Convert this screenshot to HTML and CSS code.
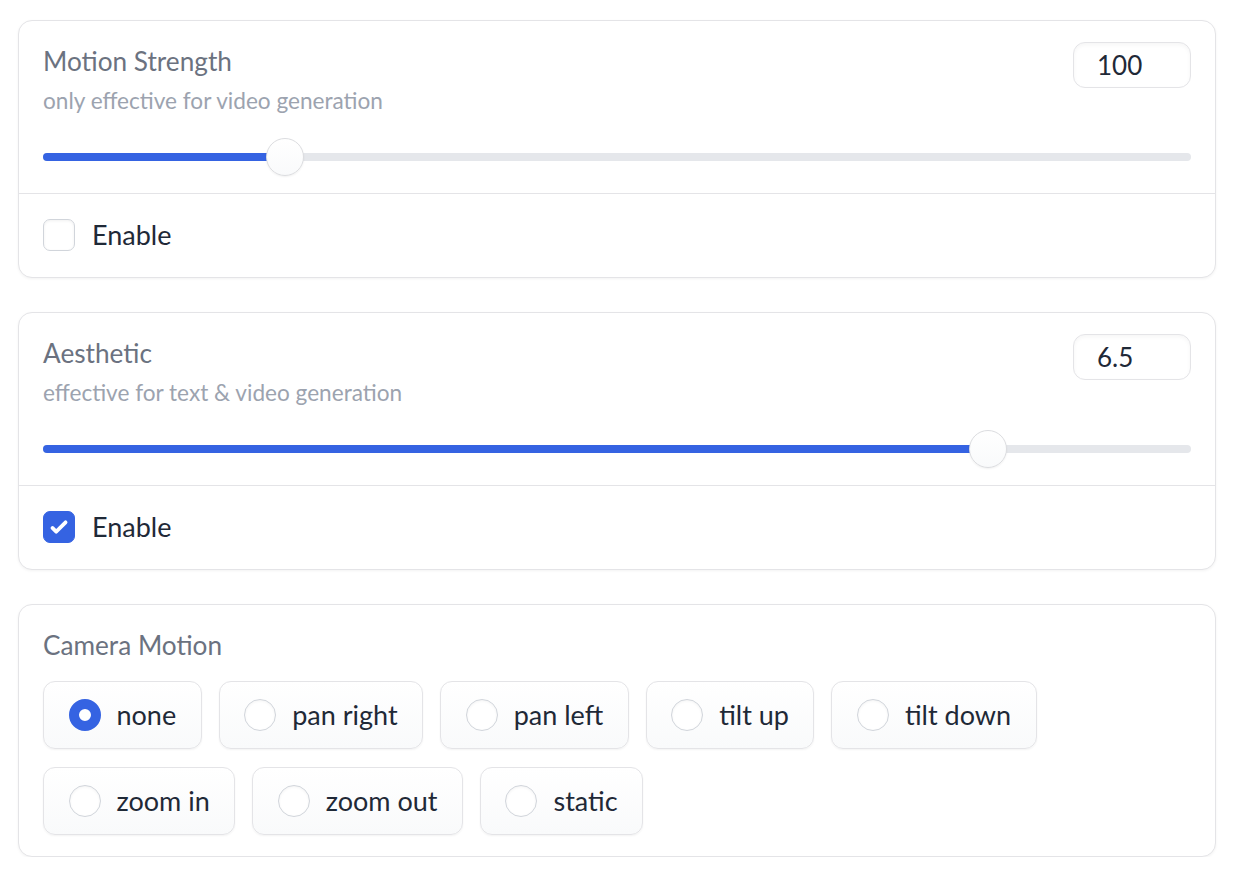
FILE: index.html
```html
<!DOCTYPE html>
<html lang="en">
<head>
<meta charset="utf-8">
<title>Settings</title>
<link rel="stylesheet" href="styles.css">
</head>
<body>
<main class="page">
  <section class="card">
    <div class="slider-block">
      <div class="head">
        <div class="titles">
          <div class="label">Motion Strength</div>
          <div class="info">only effective for video generation</div>
        </div>
        <div class="num">100</div>
      </div>
      <div class="slider">
        <div class="track">
          <div class="fill" style="width:21.1%"></div>
          <div class="thumb" style="left:21.1%"></div>
        </div>
      </div>
    </div>
    <div class="check-row">
      <span class="box"></span>
      <span class="check-text">Enable</span>
    </div>
  </section>

  <section class="card">
    <div class="slider-block">
      <div class="head">
        <div class="titles">
          <div class="label">Aesthetic</div>
          <div class="info">effective for text &amp; video generation</div>
        </div>
        <div class="num">6.5</div>
      </div>
      <div class="slider">
        <div class="track">
          <div class="fill" style="width:82.3%"></div>
          <div class="thumb" style="left:82.3%"></div>
        </div>
      </div>
    </div>
    <div class="check-row">
      <span class="box checked">
        <svg viewBox="0 0 16 16" width="32" height="32"><path fill="#fff" d="M12.207 4.793a1 1 0 010 1.414l-5 5a1 1 0 01-1.414 0l-2-2a1 1 0 011.414-1.414L6.5 9.086l4.293-4.293a1 1 0 011.414 0z"/></svg>
      </span>
      <span class="check-text">Enable</span>
    </div>
  </section>

  <section class="card radio-card">
    <div class="label">Camera Motion</div>
    <div class="options">
      <div class="opt"><span class="dot on"></span><span class="opt-text">none</span></div>
      <div class="opt"><span class="dot"></span><span class="opt-text">pan right</span></div>
      <div class="opt"><span class="dot"></span><span class="opt-text">pan left</span></div>
      <div class="opt"><span class="dot"></span><span class="opt-text">tilt up</span></div>
      <div class="opt"><span class="dot"></span><span class="opt-text">tilt down</span></div>
      <div class="opt"><span class="dot"></span><span class="opt-text">zoom in</span></div>
      <div class="opt"><span class="dot"></span><span class="opt-text">zoom out</span></div>
      <div class="opt"><span class="dot"></span><span class="opt-text">static</span></div>
    </div>
  </section>
</main>
</body>
</html>
```

FILE: styles.css
```css
* { box-sizing: border-box; }

html, body {
  margin: 0;
  background: #ffffff;
}

body {
  font-family: "Lato", "Noto Sans", "Liberation Sans", sans-serif;
  color: #1f2937;
}

.page {
  width: 1198px;
  margin-left: 18px;
  padding-top: 20px;
  display: flex;
  flex-direction: column;
  gap: 34px;
}

.card {
  border: 1px solid #e4e4e7;
  border-radius: 14px;
  background: #fff;
  box-shadow: 0 1px 3px rgba(0, 0, 0, 0.05);
}

.slider-block {
  padding: 20px 24px 17px 24px;
  border-bottom: 1px solid #e4e4e7;
}

.head {
  display: flex;
  justify-content: space-between;
  align-items: flex-start;
}

.label {
  font-size: 26.2px;
  line-height: 40px;
  height: 40px;
  color: #6b7280;
}

.info {
  margin-top: 2px;
  font-size: 22.6px;
  line-height: 36px;
  color: #9ca3af;
}

.num {
  margin-top: 1px;
  width: 118px;
  height: 46px;
  border: 1px solid #e4e4e7;
  border-radius: 12px;
  padding-left: 23px;
  font-size: 26px;
  line-height: 44px;
  color: #1f2937;
  box-shadow: inset 0 2px 4px rgba(0, 0, 0, 0.04);
}

.slider {
  margin-top: 19px;
  height: 38px;
  display: flex;
  align-items: center;
}

.track {
  position: relative;
  width: 100%;
  height: 8px;
  border-radius: 4px;
  background: #e5e7eb;
}

.fill {
  height: 8px;
  border-radius: 4px 0 0 4px;
  background: #3563e2;
}

.thumb {
  position: absolute;
  top: 50%;
  width: 38px;
  height: 38px;
  margin-left: -19px;
  margin-top: -19px;
  border-radius: 50%;
  border: 1px solid #dcdde0;
  background: linear-gradient(#ffffff, #f9fafb);
  box-shadow: 0 1px 2px rgba(0, 0, 0, 0.06);
}

.check-row {
  display: flex;
  align-items: center;
  gap: 17px;
  padding: 20px 24px 21px 24px;
}

.box {
  width: 32px;
  height: 32px;
  border-radius: 7px;
  border: 1px solid #d1d5db;
  background: #fff;
  box-shadow: inset 0 1px 3px rgba(0, 0, 0, 0.06);
  display: flex;
  align-items: center;
  justify-content: center;
}

.box.checked {
  border-color: #3563e2;
  background: #3563e2;
  box-shadow: none;
}

.box svg { display: block; }

.check-text {
  font-size: 27px;
  line-height: 42px;
  color: #1f2937;
}

.radio-card {
  padding: 20px 24px 21px 24px;
}

.options {
  margin-top: 16px;
  display: flex;
  flex-wrap: wrap;
  gap: 18px 17px;
}

.opt {
  display: flex;
  align-items: center;
  gap: 16px;
  height: 68px;
  padding: 0 24.5px;
  border: 1px solid #e4e4e7;
  border-radius: 12px;
  background: linear-gradient(#ffffff, #f9fafb);
  box-shadow: 0 1px 2px rgba(0, 0, 0, 0.05);
}

.dot {
  width: 32px;
  height: 32px;
  border-radius: 50%;
  border: 1px solid #d1d5db;
  background: #fff;
  box-shadow: inset 0 1px 3px rgba(0, 0, 0, 0.05);
}

.dot.on {
  border: 10px solid #3563e2;
  background: #fff;
  box-shadow: none;
}

.opt-text {
  font-size: 27px;
  line-height: 42px;
  color: #1f2937;
}
```
